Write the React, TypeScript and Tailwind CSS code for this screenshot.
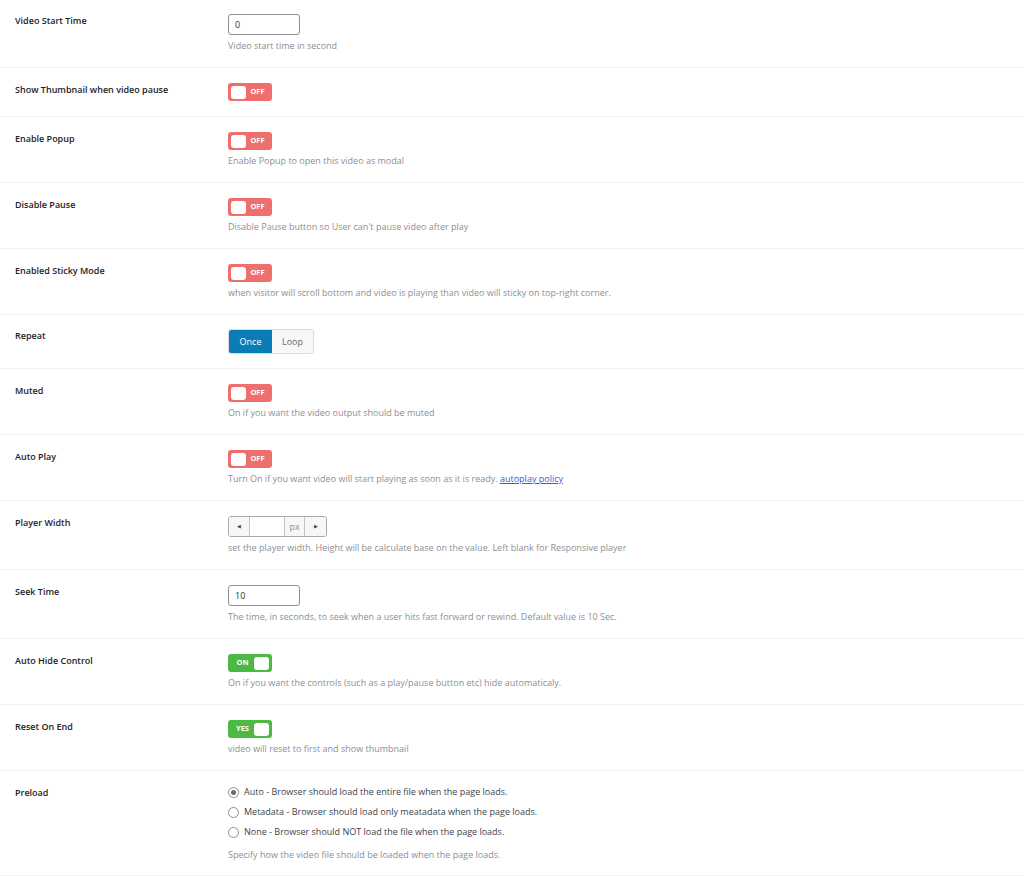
import React from "react";

type Row = {
  label: string;
  control: React.ReactNode;
  desc?: React.ReactNode;
  pad?: string;
};

function Toggle({ on, text }: { on: boolean; text: string }) {
  return (
    <div
      className={`flex h-[18px] w-[44px] items-center rounded-[3px] px-[3px] ${
        on ? "flex-row-reverse bg-[#4cb944]" : "bg-[#ef6f6e]"
      }`}
    >
      <span className="h-[13px] w-[15px] rounded-[3px] bg-white" />
      <span className="flex-1 text-center text-[7.5px] font-bold leading-none text-white">
        {text}
      </span>
    </div>
  );
}

function TextInput({ value }: { value: string }) {
  return (
    <div className="flex h-[21px] w-[72px] items-center rounded-[3px] border border-[#8c8f94] px-[6px] text-[9px] text-[#2c3338]">
      {value}
    </div>
  );
}

function Radio({ checked, label }: { checked?: boolean; label: string }) {
  return (
    <div className="flex h-[20px] items-center gap-[5px]">
      <span className="flex h-[11px] w-[11px] items-center justify-center rounded-full border border-[#8c8f94] bg-white">
        {checked && <span className="h-[5px] w-[5px] rounded-full bg-[#646970]" />}
      </span>
      <span className="text-[9px] text-[#3c434a]">{label}</span>
    </div>
  );
}

export default function App() {
  const rows: Row[] = [
    {
      label: "Video Start Time",
      control: <TextInput value="0" />,
      desc: "Video start time in second",
      pad: "pt-[14px] pb-[15px]",
    },
    { label: "Show Thumbnail when video pause", control: <Toggle on={false} text="OFF" /> },
    {
      label: "Enable Popup",
      control: <Toggle on={false} text="OFF" />,
      desc: "Enable Popup to open this video as modal",
    },
    {
      label: "Disable Pause",
      control: <Toggle on={false} text="OFF" />,
      desc: "Disable Pause button so User can't pause video after play",
    },
    {
      label: "Enabled Sticky Mode",
      control: <Toggle on={false} text="OFF" />,
      desc: "when visitor will scroll bottom and video is playing than video will sticky on top-right corner.",
    },
    {
      label: "Repeat",
      pad: "pt-[14px] pb-[14px]",
      control: (
        <div className="flex h-[25px] w-[86px] overflow-hidden rounded-[3px] border border-[#dcdcde] text-[9px]">
          <span className="flex w-[43px] items-center justify-center bg-[#0a7cb8] text-white">
            Once
          </span>
          <span className="flex flex-1 items-center justify-center bg-[#f6f7f7] text-[#646970]">
            Loop
          </span>
        </div>
      ),
    },
    {
      label: "Muted",
      control: <Toggle on={false} text="OFF" />,
      desc: "On if you want the video output should be muted",
    },
    {
      label: "Auto Play",
      control: <Toggle on={false} text="OFF" />,
      desc: (
        <>
          Turn On if you want video will start playing as soon as it is ready.{" "}
          <a className="text-[#3858e9] underline">autoplay policy</a>
        </>
      ),
    },
    {
      label: "Player Width",
      control: (
        <div className="flex h-[21px] w-[99px] overflow-hidden rounded-[3px] border border-[#a7aaad] text-[9px]">
          <span className="flex w-[21px] items-center justify-center border-r border-[#c3c4c7] bg-[#f6f7f7] text-[5px] text-[#3c434a]">
            ◀
          </span>
          <span className="w-[34px] bg-white" />
          <span className="flex w-[21px] items-center justify-center border-x border-[#c3c4c7] bg-[#f6f7f7] text-[#8c8f94]">
            px
          </span>
          <span className="flex flex-1 items-center justify-center bg-[#f6f7f7] text-[5px] text-[#3c434a]">
            ▶
          </span>
        </div>
      ),
      desc: "set the player width. Height will be calculate base on the value. Left blank for Responsive player",
    },
    {
      label: "Seek Time",
      control: <TextInput value="10" />,
      desc: "The time, in seconds, to seek when a user hits fast forward or rewind. Default value is 10 Sec.",
    },
    {
      label: "Auto Hide Control",
      control: <Toggle on text="ON" />,
      desc: "On if you want the controls (such as a play/pause button etc) hide automaticaly.",
    },
    {
      label: "Reset On End",
      control: <Toggle on text="YES" />,
      desc: "video will reset to first and show thumbnail",
    },
  ];

  return (
    <div
      className="min-h-[876px] w-full bg-white"
      style={{ fontFamily: '"Open Sans", "Liberation Sans", sans-serif' }}
    >
      {rows.map((r) => (
        <div
          key={r.label}
          className={`flex border-b border-[#f0f0f1] pl-[15px] ${r.pad ?? "pt-[15px] pb-[15px]"}`}
        >
          <div className="w-[213px] pt-[1px] text-[9px] font-semibold leading-[12px] text-[#1d2327]">
            {r.label}
          </div>
          <div className="flex flex-col items-start">
            {r.control}
            {r.desc && (
              <div className="mt-[5px] text-[9px] leading-[12px] text-[#8c8f94]">{r.desc}</div>
            )}
          </div>
        </div>
      ))}
      <div className="flex border-b border-[#f0f0f1] pb-[14px] pl-[15px] pt-[15px]">
        <div className="w-[213px] pt-[1px] text-[9px] font-semibold leading-[12px] text-[#1d2327]">
          Preload
        </div>
        <div className="-mt-[4px] flex flex-col">
          <Radio checked label="Auto - Browser should load the entire file when the page loads." />
          <Radio label="Metadata - Browser should load only meatadata when the page loads." />
          <Radio label="None - Browser should NOT load the file when the page loads." />
          <div className="mt-[7px] text-[9px] leading-[12px] text-[#8c8f94]">
            Specify how the video file should be loaded when the page loads.
          </div>
        </div>
      </div>
    </div>
  );
}
